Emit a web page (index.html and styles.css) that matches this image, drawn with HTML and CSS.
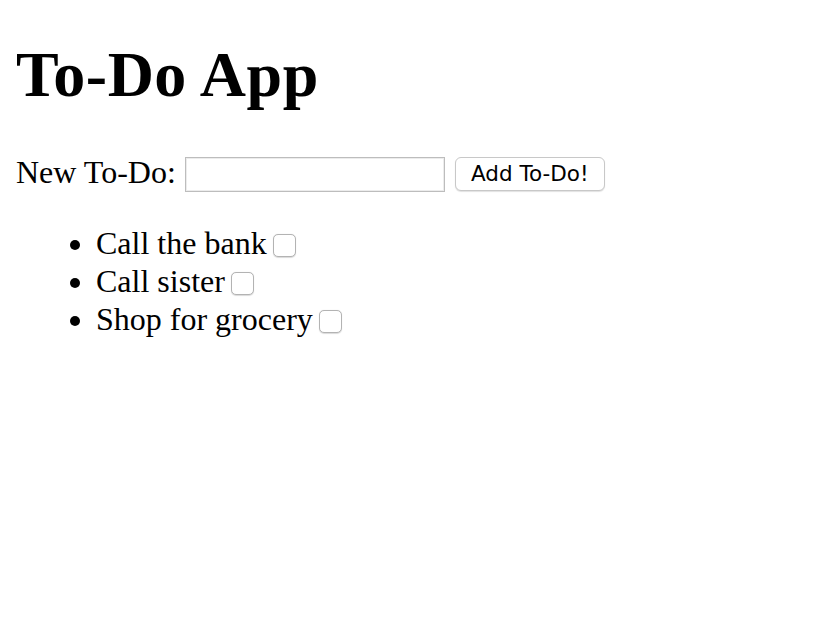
FILE: index.html
```html
<!DOCTYPE html>
<html>
<head>
<meta charset="utf-8">
<title>To-Do App</title>
<link rel="stylesheet" href="styles.css">
</head>
<body>
<h1 class="title">To-Do App</h1>
<div class="new-row">
<label class="new-label" for="todo">New To-Do:</label> <input class="new-input" id="todo" type="text"> <button class="add-btn">Add To-Do!</button>
</div>
<ul class="todo-list">
<li class="todo-item">Call the bank<input class="todo-check" type="checkbox"></li>
<li class="todo-item">Call sister<input class="todo-check" type="checkbox"></li>
<li class="todo-item">Shop for grocery<input class="todo-check" type="checkbox"></li>
</ul>
</body>
</html>
```
FILE: styles.css
```css
html, body {
  background: #ffffff;
}
body {
  margin: 16px;
  font-family: "Liberation Serif", "Times New Roman", serif;
  font-size: 32px;
  color: #000;
}
.title {
  font-size: 64px;
  font-weight: bold;
  letter-spacing: 0.5px;
  margin: 21.5px 0 42.88px;
}
.new-row {
  line-height: normal;
}
.new-input {
  box-sizing: border-box;
  width: 260px;
  height: 35px;
  margin: 0 2px 0 1px;
  border: 1px solid #bdbdbd;
  box-shadow: inset 0 0 0 1px #ececec;
  background: #fff;
  vertical-align: 2px;
  padding: 0 4px;
  font-size: 20px;
}
.add-btn {
  box-sizing: border-box;
  width: 150px;
  height: 34px;
  margin: 0;
  padding: 0;
  border: 1px solid #c8c8c8;
  border-radius: 6px;
  background: #fff;
  box-shadow: 0 1px 1px rgba(0,0,0,0.12);
  font-family: "DejaVu Sans", sans-serif;
  font-size: 21.5px;
  color: #000;
  vertical-align: 2px;
}
.todo-list {
  margin: 32px 0;
  padding-left: 80px;
}
.todo-item {
  line-height: 38px;
}
.todo-check {
  appearance: none;
  -webkit-appearance: none;
  box-sizing: border-box;
  width: 23px;
  height: 23px;
  margin: 0 0 0 6px;
  border: 1px solid #b3b3b3;
  border-radius: 5px;
  background: #fff;
  box-shadow: 0 0.5px 1px rgba(0,0,0,0.15);
  vertical-align: -3px;
}
```
